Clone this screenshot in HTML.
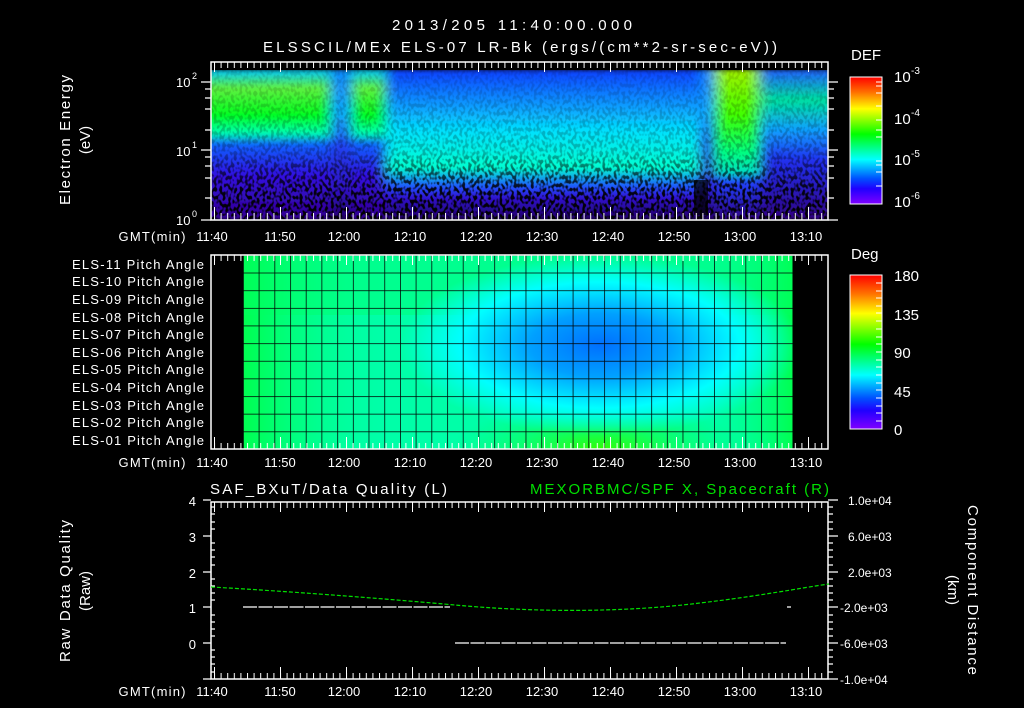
<!DOCTYPE html>
<html><head><meta charset="utf-8"><style>
html,body{margin:0;padding:0;background:#000;}
svg{display:block;font-family:"Liberation Sans",sans-serif;}
text{fill:#fff;font-size:13px;}
</style></head><body>
<svg width="1024" height="708" viewBox="0 0 1024 708" xmlns="http://www.w3.org/2000/svg">
<defs>
 <pattern id="mt" x="214" y="0" width="6.6" height="10" patternUnits="userSpaceOnUse"><rect x="0" y="0" width="1" height="10" fill="#fff"/></pattern>
 <pattern id="Mt" x="214" y="0" width="66" height="20" patternUnits="userSpaceOnUse"><rect x="0" y="0" width="1" height="20" fill="#fff"/></pattern>
 <linearGradient id="cb" x1="0" y1="0" x2="0" y2="1">
  <stop offset="0" stop-color="#ff0000"/><stop offset="0.12" stop-color="#ff7000"/><stop offset="0.25" stop-color="#ffff00"/>
  <stop offset="0.45" stop-color="#00ff00"/><stop offset="0.6" stop-color="#00ffc0"/><stop offset="0.65" stop-color="#00ffff"/>
  <stop offset="0.8" stop-color="#0050ff"/><stop offset="0.88" stop-color="#2000ff"/><stop offset="1" stop-color="#8000ff"/>
 </linearGradient>
 <linearGradient id="gL" x1="0" y1="0" x2="0" y2="1">
  <stop offset="0" stop-color="#00c8ff"/><stop offset="0.12" stop-color="#60f040"/><stop offset="0.3" stop-color="#00ff20"/><stop offset="0.42" stop-color="#00ffb0"/>
  <stop offset="0.5" stop-color="#1060ff"/><stop offset="0.7" stop-color="#3010e0"/><stop offset="1" stop-color="#300090"/>
 </linearGradient>
 <linearGradient id="gM" x1="0" y1="0" x2="0" y2="1">
  <stop offset="0" stop-color="#1040ff"/><stop offset="0.25" stop-color="#10a0ff"/><stop offset="0.4" stop-color="#00e0ff"/><stop offset="0.65" stop-color="#00ffd0"/>
  <stop offset="0.78" stop-color="#2050ff"/><stop offset="0.85" stop-color="#3010d0"/><stop offset="1" stop-color="#200060"/>
 </linearGradient>
 <linearGradient id="gD" x1="0" y1="0" x2="0" y2="1">
  <stop offset="0" stop-color="#1080ff"/><stop offset="0.3" stop-color="#10a0ff"/><stop offset="0.5" stop-color="#2040f0"/><stop offset="0.8" stop-color="#3010c0"/><stop offset="1" stop-color="#200060"/>
 </linearGradient>
 <linearGradient id="gR" x1="0" y1="0" x2="0" y2="1">
  <stop offset="0" stop-color="#a0f000"/><stop offset="0.3" stop-color="#40ff00"/><stop offset="0.55" stop-color="#00ff80"/><stop offset="0.68" stop-color="#00e0c0"/>
  <stop offset="0.75" stop-color="#2040ff"/><stop offset="1" stop-color="#300080"/>
 </linearGradient>
 <linearGradient id="gE" x1="0" y1="0" x2="0" y2="1">
  <stop offset="0" stop-color="#2060ff"/><stop offset="0.2" stop-color="#00e0a0"/><stop offset="0.4" stop-color="#10a0ff"/><stop offset="0.6" stop-color="#2030f0"/><stop offset="1" stop-color="#300080"/>
 </linearGradient>
 <filter id="bl" x="-0.05" y="-0.05" width="1.1" height="1.1"><feGaussianBlur stdDeviation="6 2"/></filter>
 <clipPath id="c1"><rect x="211" y="70" width="617" height="150"/></clipPath>
 <filter id="nz" x="0" y="0" width="1" height="1">
  <feTurbulence type="fractalNoise" baseFrequency="0.35 0.25" numOctaves="1" seed="3"/>
  <feColorMatrix values="0 0 0 0 0  0 0 0 0 0  0 0 0 0 0  0 0 0 -6 3.3"/>
 </filter>
 <linearGradient id="fade" x1="0" y1="0" x2="0" y2="1">
  <stop offset="0" stop-color="#fff" stop-opacity="0.1"/><stop offset="0.55" stop-color="#fff" stop-opacity="0.25"/><stop offset="0.8" stop-color="#fff" stop-opacity="0.9"/><stop offset="1" stop-color="#fff" stop-opacity="1"/>
 </linearGradient>
 <mask id="fm"><rect x="211" y="70" width="617" height="150" fill="url(#fade)"/></mask>
 <radialGradient id="blue" cx="600" cy="345" r="200" gradientUnits="userSpaceOnUse" gradientTransform="translate(600 345) scale(1 0.45) translate(-600 -345)">
  <stop offset="0" stop-color="#0070ff"/><stop offset="0.35" stop-color="#00a0ff"/><stop offset="0.7" stop-color="#00ffff"/><stop offset="1" stop-color="#00ffff" stop-opacity="0"/>
 </radialGradient>
 <radialGradient id="grn" cx="600" cy="449" r="150" gradientUnits="userSpaceOnUse" gradientTransform="translate(600 449) scale(1 0.3) translate(-600 -449)">
  <stop offset="0" stop-color="#30ff00"/><stop offset="1" stop-color="#00ff60" stop-opacity="0"/>
 </radialGradient>
 <linearGradient id="edge" x1="0" y1="0" x2="1" y2="0">
  <stop offset="0" stop-color="#00ff50"/><stop offset="0.25" stop-color="#00ff90" stop-opacity="0"/><stop offset="0.85" stop-color="#00ff90" stop-opacity="0"/><stop offset="1" stop-color="#00ff50"/>
 </linearGradient>
 <pattern id="grid" x="243" y="255" width="15.7" height="17.64" patternUnits="userSpaceOnUse"><path d="M0 0V17.64M0 0H15.7" stroke="#000" stroke-width="1.5" fill="none"/></pattern>
</defs>

<text x="512" y="30" text-anchor="middle" textLength="240" style="font-size:15px">2013/205 11:40:00.000</text>
<text x="520" y="52" text-anchor="middle" textLength="514" style="font-size:15px">ELSSCIL/MEx ELS-07 LR-Bk  (ergs/(cm**2-sr-sec-eV))</text>

<!-- Panel 1 spectrogram -->
<g clip-path="url(#c1)">
<g filter="url(#bl)">
<rect x="200" y="70" width="131" height="150" fill="url(#gL)"/>
<rect x="331" y="70" width="20" height="150" fill="url(#gD)"/>
<rect x="351" y="70" width="35" height="150" fill="url(#gL)"/>
<rect x="386" y="70" width="314" height="150" fill="url(#gM)"/>
<rect x="700" y="70" width="14" height="150" fill="url(#gD)"/>
<rect x="714" y="70" width="46" height="150" fill="url(#gR)"/>
<rect x="760" y="70" width="80" height="150" fill="url(#gE)"/>
</g>
<rect x="211" y="70" width="617" height="150" filter="url(#nz)" mask="url(#fm)"/>
<rect x="694" y="180" width="14" height="35" fill="#000" opacity="0.7"/>
</g>
<rect x="211" y="62" width="617" height="158" fill="none" stroke="#fff" stroke-width="1.5"/>
<rect x="211" y="62" width="617" height="6" fill="url(#mt)"/><rect x="211" y="62" width="617" height="10" fill="url(#Mt)"/>
<rect x="211" y="213" width="617" height="7" fill="url(#mt)"/><rect x="211" y="207" width="617" height="13" fill="url(#Mt)"/>
<path d="M201 82h10M205 89h6M205 98h6M205 109h6M205 130h6M201 150h10M205 157h6M205 166h6M205 178h6M205 198h6M201 220h10M828 82h10M828 89h6M828 98h6M828 109h6M828 130h6M828 150h10M828 157h6M828 166h6M828 178h6M828 198h6M828 220h10" stroke="#fff" stroke-width="1.2"/>
<text x="176" y="87">10</text><text x="192" y="79" style="font-size:9px">2</text>
<text x="176" y="156">10</text><text x="192" y="148" style="font-size:9px">1</text>
<text x="176" y="225">10</text><text x="192" y="217" style="font-size:9px">0</text>
<text transform="translate(70 140) rotate(-90)" text-anchor="middle" textLength="130" style="font-size:15px">Electron Energy</text>
<text transform="translate(90 140) rotate(-90)" text-anchor="middle" style="font-size:15px">(eV)</text>

<!-- DEF colorbar -->
<text x="851" y="60" style="font-size:15px">DEF</text>
<rect x="850" y="77" width="32" height="127" fill="url(#cb)" stroke="#fff" stroke-width="1"/>
<path d="M876 82h6M876 86h6M876 93h6M876 106h6M876 120h6M876 130h6M876 137h6M876 161h6M876 165h6M876 172h6M876 186h6" stroke="#fff"/>
<text x="894" y="82" style="font-size:15px">10</text><text x="911" y="74" style="font-size:10px">-3</text>
<text x="894" y="124" style="font-size:15px">10</text><text x="911" y="116" style="font-size:10px">-4</text>
<text x="894" y="165" style="font-size:15px">10</text><text x="911" y="157" style="font-size:10px">-5</text>
<text x="894" y="207" style="font-size:15px">10</text><text x="911" y="199" style="font-size:10px">-6</text>

<!-- time labels -->
<g text-anchor="middle">
<text x="152" y="241" textLength="67">GMT(min)</text><text x="212" y="241">11:40</text><text x="280" y="241">11:50</text><text x="344" y="241">12:00</text><text x="410" y="241">12:10</text><text x="476" y="241">12:20</text><text x="542" y="241">12:30</text><text x="608" y="241">12:40</text><text x="674" y="241">12:50</text><text x="740" y="241">13:00</text><text x="806" y="241">13:10</text>
<text x="152" y="467" textLength="67">GMT(min)</text><text x="212" y="467">11:40</text><text x="280" y="467">11:50</text><text x="344" y="467">12:00</text><text x="410" y="467">12:10</text><text x="476" y="467">12:20</text><text x="542" y="467">12:30</text><text x="608" y="467">12:40</text><text x="674" y="467">12:50</text><text x="740" y="467">13:00</text><text x="806" y="467">13:10</text>
<text x="152" y="696" textLength="67">GMT(min)</text><text x="212" y="696">11:40</text><text x="280" y="696">11:50</text><text x="344" y="696">12:00</text><text x="410" y="696">12:10</text><text x="476" y="696">12:20</text><text x="542" y="696">12:30</text><text x="608" y="696">12:40</text><text x="674" y="696">12:50</text><text x="740" y="696">13:00</text><text x="806" y="696">13:10</text>
</g>

<!-- Panel 2 -->
<rect x="243" y="255" width="550" height="194" fill="#00ffa8"/>
<rect x="243" y="255" width="550" height="194" fill="url(#edge)"/>
<rect x="243" y="255" width="550" height="60" fill="#00ff60" opacity="0.35"/>
<rect x="243" y="255" width="550" height="194" fill="url(#grn)"/>
<rect x="243" y="255" width="550" height="194" fill="url(#blue)"/>
<rect x="243" y="255" width="551" height="195" fill="url(#grid)"/>
<rect x="211" y="255" width="617" height="194" fill="none" stroke="#fff" stroke-width="1.5"/>
<rect x="211" y="255" width="617" height="6" fill="url(#mt)"/><rect x="211" y="255" width="617" height="10" fill="url(#Mt)"/>
<rect x="211" y="443" width="617" height="6" fill="url(#mt)"/><rect x="211" y="437" width="617" height="12" fill="url(#Mt)"/>
<g>
<text x="72" y="269" textLength="132">ELS-11 Pitch Angle</text><text x="72" y="286" textLength="132">ELS-10 Pitch Angle</text><text x="72" y="304" textLength="132">ELS-09 Pitch Angle</text><text x="72" y="322" textLength="132">ELS-08 Pitch Angle</text><text x="72" y="339" textLength="132">ELS-07 Pitch Angle</text><text x="72" y="357" textLength="132">ELS-06 Pitch Angle</text><text x="72" y="374" textLength="132">ELS-05 Pitch Angle</text><text x="72" y="392" textLength="132">ELS-04 Pitch Angle</text><text x="72" y="410" textLength="132">ELS-03 Pitch Angle</text><text x="72" y="427" textLength="132">ELS-02 Pitch Angle</text><text x="72" y="445" textLength="132">ELS-01 Pitch Angle</text>
</g>
<text x="851" y="259" style="font-size:15px">Deg</text>
<rect x="850" y="275" width="32" height="154" fill="url(#cb)" stroke="#fff" stroke-width="1"/>
<path d="M876 283h6M876 291h6M876 298h6M876 306h6M876 313h6M876 321h6M876 329h6M876 337h6M876 344h6M876 352h6M876 360h6M876 367h6M876 375h6M876 383h6M876 390h6M876 398h6M876 406h6M876 413h6M876 421h6" stroke="#fff"/>
<text x="894" y="281" style="font-size:15px">180</text><text x="894" y="320" style="font-size:15px">135</text><text x="894" y="358" style="font-size:15px">90</text><text x="894" y="397" style="font-size:15px">45</text><text x="894" y="435" style="font-size:15px">0</text>

<!-- Panel 3 -->
<text x="210" y="494" textLength="237" style="font-size:15px">SAF_BXuT/Data Quality (L)</text>
<text x="530" y="494" textLength="299" style="font-size:15px;fill:#00e000">MEXORBMC/SPF X, Spacecraft (R)</text>
<rect x="211" y="502" width="617" height="177" fill="none" stroke="#fff" stroke-width="1.5"/>
<rect x="211" y="502" width="617" height="6" fill="url(#mt)"/><rect x="211" y="502" width="617" height="10" fill="url(#Mt)"/>
<rect x="211" y="673" width="617" height="6" fill="url(#mt)"/><rect x="211" y="667" width="617" height="12" fill="url(#Mt)"/>
<path d="M211 500h-8M211 536h-8M211 572h-8M211 607h-8M211 643h-8M211 679h-8M211 507h4M211 514h4M211 522h4M211 529h4M211 543h4M211 550h4M211 557h4M211 565h4M211 579h4M211 586h4M211 593h4M211 600h4M211 615h4M211 622h4M211 629h4M211 636h4M211 650h4M211 657h4M211 664h4M211 672h4M828 500h10M828 536h10M828 572h10M828 607h10M828 643h10M828 679h10M828 507h5M828 514h5M828 522h5M828 529h5M828 543h5M828 550h5M828 557h5M828 565h5M828 579h5M828 586h5M828 593h5M828 600h5M828 615h5M828 622h5M828 629h5M828 636h5M828 650h5M828 657h5M828 664h5M828 672h5" stroke="#fff" stroke-width="1.2"/>
<g text-anchor="end" style="font-size:14px"><text x="196" y="506">4</text><text x="196" y="542">3</text><text x="196" y="578">2</text><text x="196" y="613">1</text><text x="196" y="649">0</text></g>
<text x="848" y="505" style="font-size:12px">1.0e+04</text><text x="848" y="541" style="font-size:12px">6.0e+03</text><text x="848" y="577" style="font-size:12px">2.0e+03</text><text x="840" y="612" style="font-size:12px">-2.0e+03</text><text x="840" y="648" style="font-size:12px">-6.0e+03</text><text x="840" y="684" style="font-size:12px">-1.0e+04</text>
<text transform="translate(70 591) rotate(-90)" text-anchor="middle" textLength="142" style="font-size:15px">Raw Data Quality</text>
<text transform="translate(90 591) rotate(-90)" text-anchor="middle" style="font-size:15px">(Raw)</text>
<text transform="translate(968 590) rotate(90)" text-anchor="middle" textLength="170" style="font-size:15px">Component Distance</text>
<text transform="translate(948 590) rotate(90)" text-anchor="middle" style="font-size:15px">(km)</text>
<path d="M243 607H450M455 643H786M787 607h4" stroke="#fff" stroke-width="1.2" stroke-dasharray="14 1.5"/>
<path d="M211 587C300 592 400 600 455 605C530 612 620 613 700 603C760 596 800 588 829 584" stroke="#00e000" stroke-width="1.2" fill="none" stroke-dasharray="4 2"/>
</svg>
</body></html>
